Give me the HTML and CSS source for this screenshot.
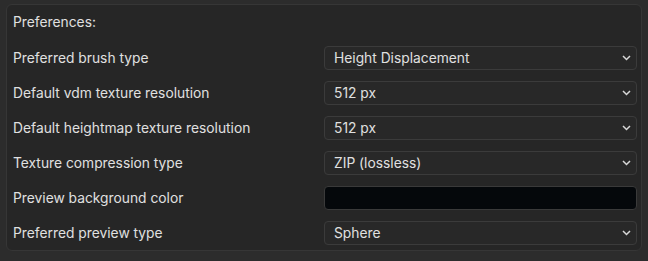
FILE: index.html
```html
<!DOCTYPE html>
<html>
    <head>
        <meta charset="UTF-8">
        <title>Preferences</title>
        <link rel="stylesheet" href="styles.css">
    </head>
    <body>
        <div class="panel">
            <div class="title">Preferences:</div>

            <div class="rows">
                <div class="label">Preferred brush type</div>
                <div class="select">Height Displacement<span class="chev"><svg width="9" height="6" viewBox="0 0 9 6"><path d="M1 1 L4.5 4.5 L8 1" fill="none" stroke="#d8d8d8" stroke-width="1.5"/></svg></span></div>

                <div class="label">Default vdm texture resolution</div>
                <div class="select">512 px<span class="chev"><svg width="9" height="6" viewBox="0 0 9 6"><path d="M1 1 L4.5 4.5 L8 1" fill="none" stroke="#d8d8d8" stroke-width="1.5"/></svg></span></div>

                <div class="label">Default heightmap texture resolution</div>
                <div class="select">512 px<span class="chev"><svg width="9" height="6" viewBox="0 0 9 6"><path d="M1 1 L4.5 4.5 L8 1" fill="none" stroke="#d8d8d8" stroke-width="1.5"/></svg></span></div>

                <div class="label">Texture compression type</div>
                <div class="select">ZIP (lossless)<span class="chev"><svg width="9" height="6" viewBox="0 0 9 6"><path d="M1 1 L4.5 4.5 L8 1" fill="none" stroke="#d8d8d8" stroke-width="1.5"/></svg></span></div>

                <div class="label">Preview background color</div>
                <div class="swatch"></div>

                <div class="label">Preferred preview type</div>
                <div class="select">Sphere<span class="chev"><svg width="9" height="6" viewBox="0 0 9 6"><path d="M1 1 L4.5 4.5 L8 1" fill="none" stroke="#d8d8d8" stroke-width="1.5"/></svg></span></div>
            </div>
        </div>
    </body>
</html>
```

FILE: styles.css
```css
body{
    margin: 0;
    background: #2c2c2c;
    font-family: Inter, "DejaVu Sans", sans-serif;
    font-size: 13.8px;
    color: #e0e0e0;
}
/* 바깥 패널 */
.panel{
    margin: 4px 0 0 6px;
    width: 636px;
    height: 247px;
    box-sizing: border-box;
    background: #262626;
    border: 1px solid #363636;
    border-radius: 6px;
    padding: 5px 4px 0 6px;
}
.title{
    height: 24px;
    line-height: 24px;
    margin-bottom: 12px;
}
/* 라벨 + 드롭다운 */
.rows{
    display: grid;
    grid-template-columns: 1fr 313px;
    row-gap: 11px;
}
.label{
    height: 24px;
    line-height: 24px;
}
.select, .swatch{
    height: 24px;
    box-sizing: border-box;
    border: 1px solid #3b3b3b;
    border-radius: 4px;
}
.select{
    background: #282828;
    line-height: 22px;
    padding-left: 9px;
    position: relative;
}
.chev{
    position: absolute;
    right: 5px;
    top: 8px;
    display: flex;
}
.swatch{
    background: #05080b;
    border-color: #3a3a3a;
}
```
